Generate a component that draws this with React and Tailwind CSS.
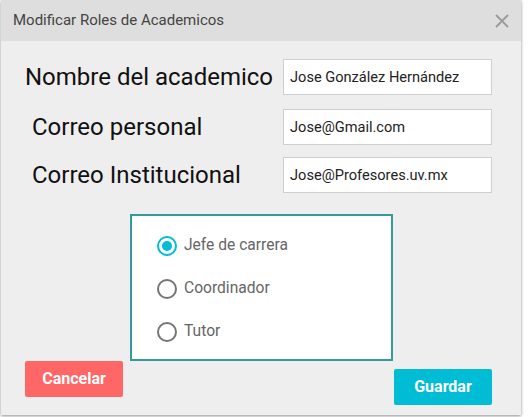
import React, { useState } from 'react';

const roles = ['Jefe de carrera', 'Coordinador', 'Tutor'];

const App = () => {
  const [rol, setRol] = useState('Jefe de carrera');

  return (
    <div className="w-[528px] h-[417px] bg-white" style={{ fontFamily: 'Roboto, "Liberation Sans", sans-serif' }}>
      <div className="ml-[1px] w-[520px] h-[415px] bg-[#eeeeee] shadow-[0_1px_3px_rgba(0,0,0,0.45)] flex flex-col">
        {/* Header */}
        <div className="h-[41px] bg-[#dedede] flex items-center justify-between pl-[12px] pr-[11px]">
          <span className="text-[15px] text-[#444]">Modificar Roles de Academicos</span>
          <svg width="16" height="16" viewBox="0 0 16 16">
            <path d="M2 2 L14 14 M14 2 L2 14" stroke="#9a9a9a" strokeWidth="1.8" />
          </svg>
        </div>

        {/* Campos */}
        <div className="flex flex-col pt-[18px] pl-[24px] pr-[29px]">
          <div className="flex items-center justify-between h-[36px]">
            <label className="text-[24px] text-[#111]">Nombre del academico</label>
            <input
              type="text"
              defaultValue="Jose González Hernández"
              className="w-[209px] h-[36px] bg-white border border-[#cfcfcf] px-[6px] text-[14.6px] text-[#222] outline-none"
            />
          </div>
          <div className="flex items-center justify-between h-[36px] mt-[14px]">
            <label className="text-[24px] text-[#111] pl-[7px]">Correo personal</label>
            <input
              type="text"
              defaultValue="Jose@Gmail.com"
              className="w-[209px] h-[36px] bg-white border border-[#cfcfcf] px-[6px] text-[14.6px] text-[#222] outline-none"
            />
          </div>
          <div className="flex items-center justify-between h-[36px] mt-[12px]">
            <label className="text-[24px] text-[#111] pl-[7px]">Correo Institucional</label>
            <input
              type="text"
              defaultValue="Jose@Profesores.uv.mx"
              className="w-[209px] h-[36px] bg-white border border-[#cfcfcf] px-[6px] text-[14.6px] text-[#222] outline-none"
            />
          </div>
        </div>

        {/* Roles */}
        <div className="ml-[129px] mt-[21px] w-[263px] h-[147px] bg-white border-2 border-[#339c9a] pt-[9px] pl-[25px]">
          {roles.map((r, i) => (
            <label
              key={r}
              className={`flex items-center cursor-pointer ${i === 1 ? 'h-[44px]' : 'h-[42px]'}`}
              onClick={() => setRol(r)}
            >
              {rol === r ? (
                <span className="w-[20px] h-[20px] rounded-full border-2 border-[#00bcd4] flex items-center justify-center">
                  <span className="w-[10px] h-[10px] rounded-full bg-[#00bcd4]"></span>
                </span>
              ) : (
                <span className="w-[20px] h-[20px] rounded-full border-2 border-[#757575]"></span>
              )}
              <span className="ml-[7px] text-[15.6px] text-[#666]">{r}</span>
            </label>
          ))}
        </div>

        {/* Acciones */}
        <div className="flex items-start justify-between pl-[24px] pr-[29px]">
          <button className="w-[98px] h-[36px] bg-[#ff6666] rounded-[2px] text-white text-[16px] font-bold">
            Cancelar
          </button>
          <button className="mt-[8px] w-[98px] h-[36px] bg-[#00bcd4] rounded-[2px] text-white text-[16px] font-bold">
            Guardar
          </button>
        </div>
      </div>
    </div>
  );
};

export default App;
